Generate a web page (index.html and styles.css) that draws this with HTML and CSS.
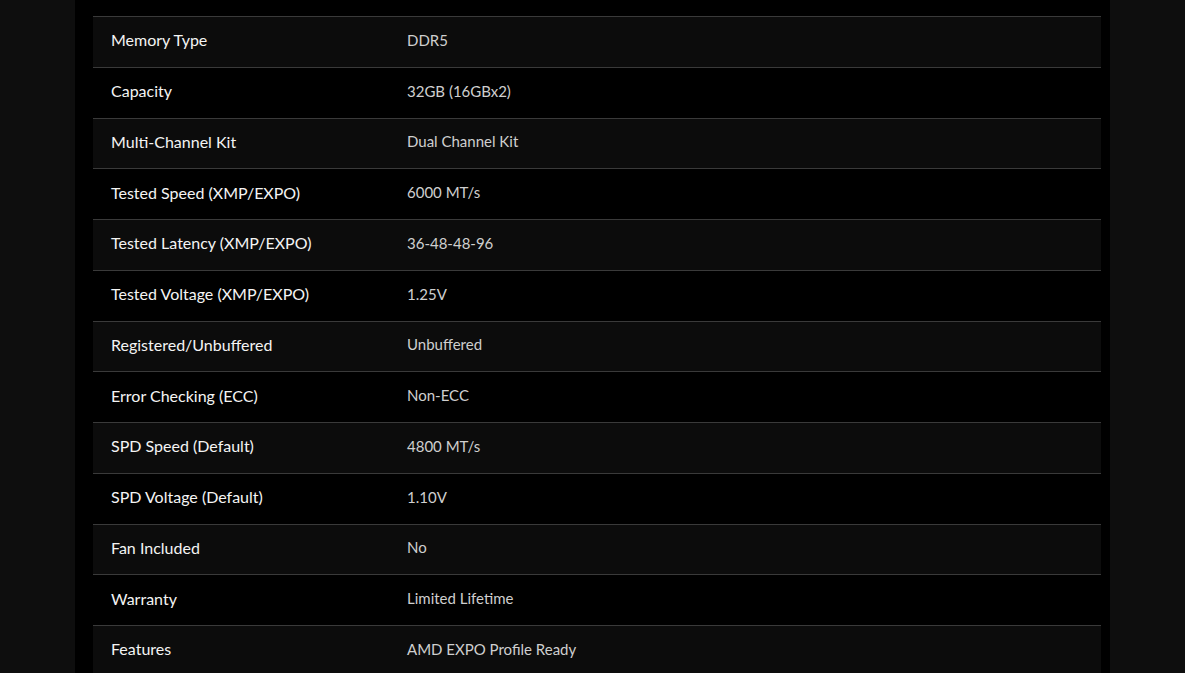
FILE: index.html
```html
<!DOCTYPE html>
<html lang="en">
<head>
<meta charset="utf-8">
<title>Specifications</title>
<link rel="stylesheet" href="styles.css">
</head>
<body>
<main class="panel">
  <div class="specs">
    <div class="row alt"><div class="label">Memory Type</div><div class="value">DDR5</div></div>
    <div class="row"><div class="label">Capacity</div><div class="value">32GB (16GBx2)</div></div>
    <div class="row alt"><div class="label">Multi-Channel Kit</div><div class="value">Dual Channel Kit</div></div>
    <div class="row"><div class="label">Tested Speed (XMP/EXPO)</div><div class="value">6000 MT/s</div></div>
    <div class="row alt"><div class="label">Tested Latency (XMP/EXPO)</div><div class="value">36-48-48-96</div></div>
    <div class="row"><div class="label">Tested Voltage (XMP/EXPO)</div><div class="value">1.25V</div></div>
    <div class="row alt"><div class="label">Registered/Unbuffered</div><div class="value">Unbuffered</div></div>
    <div class="row"><div class="label">Error Checking (ECC)</div><div class="value">Non-ECC</div></div>
    <div class="row alt"><div class="label">SPD Speed (Default)</div><div class="value">4800 MT/s</div></div>
    <div class="row"><div class="label">SPD Voltage (Default)</div><div class="value">1.10V</div></div>
    <div class="row alt"><div class="label">Fan Included</div><div class="value">No</div></div>
    <div class="row"><div class="label">Warranty</div><div class="value">Limited Lifetime</div></div>
    <div class="row alt"><div class="label">Features</div><div class="value">AMD EXPO Profile Ready</div></div>
  </div>
</main>
</body>
</html>
```
FILE: styles.css
```css
html, body {
  margin: 0;
  padding: 0;
  background: #0e0e0e;
  height: 100%;
  overflow: hidden;
}
body {
  font-family: "Lato", "Open Sans", sans-serif;
}
.panel {
  margin-left: 75px;
  width: 1035px;
  min-height: 100%;
  box-sizing: border-box;
  background: #000;
  padding: 16px 9px 0 18px;
}
.specs {
  display: flex;
  flex-direction: column;
}
.row {
  display: grid;
  grid-template-columns: 314px 1fr;
  align-items: center;
  height: 50.75px;
  box-sizing: border-box;
  border-top: 1px solid #3a3a3a;
  padding-bottom: 4px;
  background: #000;
}
.row.alt {
  background: #0c0c0c;
}
.label {
  padding-left: 18px;
  font-size: 16px;
  color: #f4f4f4;
}
.value {
  padding-left: 0;
  font-size: 15px;
  color: #cfcfcf;
}
```
